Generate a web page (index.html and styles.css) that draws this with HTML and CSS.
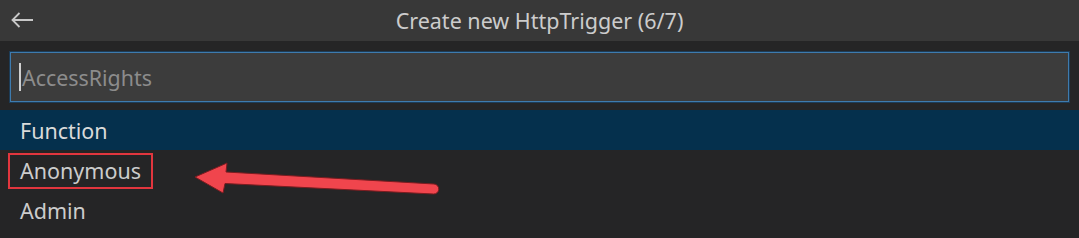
FILE: index.html
```html
<!DOCTYPE html>
<html>
<head>
<meta charset="utf-8">
<link rel="stylesheet" href="styles.css">
</head>
<body>
<div class="widget">
  <div class="titlebar">
    <span class="back">
      <svg width="24" height="18" viewBox="0 0 24 18"><path d="M23 9H2.5M9.5 2L2.5 9L9.5 16" fill="none" stroke="#c8c8c8" stroke-width="1.8"/></svg>
    </span>
    <span class="title">Create new HttpTrigger (6/7)</span>
  </div>
  <div class="inputwrap">
    <div class="input"><span class="caret"></span><span class="placeholder">AccessRights</span></div>
  </div>
  <ul class="list">
    <li class="item selected">Function</li>
    <li class="item"><span class="marked">Anonymous</span></li>
    <li class="item">Admin</li>
  </ul>
  <svg class="arrow" width="260" height="40" viewBox="0 0 260 40">
    <g fill="#f0454d" stroke="#7a1c20" stroke-width="1" stroke-linejoin="round">
      <path d="M3 15 L35 1 L34 10 L242 22 A5 5 0 0 1 241.5 32 L33 21.5 L31 31 Z"/>
    </g>
  </svg>
</div>
</body>
</html>
```
FILE: styles.css
```css
html, body {
  margin: 0;
  padding: 0;
  background: #252526;
}
body {
  width: 1079px;
  height: 238px;
  overflow: hidden;
  font-family: "Noto Sans", "Open Sans", sans-serif;
}
.widget {
  position: relative;
  width: 1079px;
  height: 238px;
  background: #252526;
}
.titlebar {
  position: relative;
  height: 41px;
  background: #383838;
  display: flex;
  align-items: center;
  justify-content: center;
}
.back {
  position: absolute;
  left: 10px;
  top: 11px;
  display: flex;
}
.title {
  color: #cccccc;
  font-size: 21.5px;
}
.inputwrap {
  padding: 11px 10px 8px 10px;
}
.input {
  height: 48px;
  background: #3c3c3c;
  border: 1px solid #3e7bae;
  box-shadow: 0 0 0 1px #1d3c57;
  display: flex;
  align-items: center;
  padding-left: 8px;
}
.caret {
  width: 2px;
  height: 28px;
  background: #d0d0d0;
  margin-right: 1px;
}
.placeholder {
  color: #8c8c8c;
  font-size: 21.4px;
}
.list {
  list-style: none;
  margin: 0;
  padding: 0;
}
.item {
  height: 40px;
  display: flex;
  align-items: center;
  padding-left: 20px;
  color: #cccccc;
  font-size: 21.5px;
}
.item.selected {
  background: #05304d;
  color: #dadada;
}
.marked {
  position: relative;
}
.marked::before {
  content: "";
  position: absolute;
  left: -12px;
  right: -12px;
  top: -3px;
  bottom: -4px;
  border: 2px solid #e2363e;
}
.arrow {
  position: absolute;
  left: 192px;
  top: 162px;
}
```
